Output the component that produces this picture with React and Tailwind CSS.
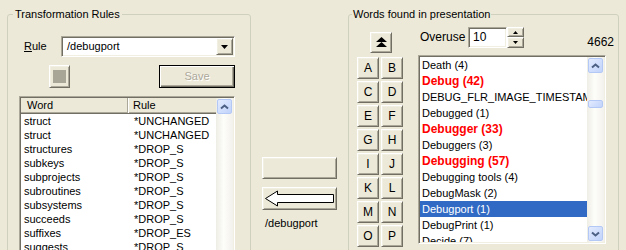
import React from 'react';

const raised = "bg-[#ECE9D8] border border-t-white border-l-white border-r-[#716F64] border-b-[#716F64] shadow-[inset_1px_1px_0_#F1EFE2,inset_-1px_-1px_0_#ACA899]";
const sunken = "border border-t-[#ACA899] border-l-[#ACA899] border-r-white border-b-white shadow-[inset_1px_1px_0_#716F64,inset_-1px_-1px_0_#F1EFE2]";
const xpBtn = "rounded-[2px] border border-[#B4C8F6] bg-[linear-gradient(135deg,#E3EBFE,#C1D3FB)] flex items-center justify-center";

const leftRows = [
    ["struct", "*UNCHANGED"],
    ["struct", "*UNCHANGED"],
    ["structures", "*DROP_S"],
    ["subkeys", "*DROP_S"],
    ["subprojects", "*DROP_S"],
    ["subroutines", "*DROP_S"],
    ["subsystems", "*DROP_S"],
    ["succeeds", "*DROP_S"],
    ["suffixes", "*DROP_ES"],
    ["suggests", "*DROP_S"],
];

const words = [
    { t: "Death (4)" },
    { t: "Debug (42)", hot: true },
    { t: "DEBUG_FLR_IMAGE_TIMESTAMP (1)" },
    { t: "Debugged (1)" },
    { t: "Debugger (33)", hot: true },
    { t: "Debuggers (3)" },
    { t: "Debugging (57)", hot: true },
    { t: "Debugging tools (4)" },
    { t: "DebugMask (2)" },
    { t: "Debugport (1)", sel: true },
    { t: "DebugPrint (1)" },
    { t: "Decide (7)" },
];

const letters = ["A", "B", "C", "D", "E", "F", "G", "H", "I", "J", "K", "L", "M", "N", "O", "P"];

function Chevron({ down }) {
    return (
        <svg width="9" height="6" viewBox="0 0 9 6">
            <path d={down ? "M1 1.5 L4.5 4.5 L8 1.5" : "M1 4.5 L4.5 1.5 L8 4.5"} fill="none" stroke="#4D6185" strokeWidth="2" />
        </svg>
    );
}

function Track({ children, className }) {
    return (
        <div className={`w-[17px] flex flex-col items-center bg-[linear-gradient(to_right,#EEEDE5,#FDFDFA_45%,#F3F1EC)] ${className}`}>
            {children}
        </div>
    );
}

export default function App() {
    return (
        <div className="w-[626px] h-[250px] overflow-hidden bg-[#ECE9D8] flex items-start font-['Liberation_Sans',Arial,sans-serif] text-[11px] text-black leading-[13px]">
            {/* Transformation Rules */}
            <div className="relative ml-[7px] mt-[14px] w-[244px] h-[260px] border border-[#D0D0BF] rounded-[3px]">
                <span className="absolute -top-[7px] left-[5px] px-[2px] bg-[#ECE9D8]">Transformation Rules</span>
                <div className="pt-[21px] pl-[16px] flex items-center">
                    <span className="w-[37px]"><span className="underline">R</span>ule</span>
                    <div className={`w-[174px] h-[21px] bg-white flex items-center ${sunken}`}>
                        <span className="flex-1 pl-[5px]">/debugport</span>
                        <div className={`w-[17px] h-[17px] mr-[1px] flex items-center justify-center ${raised}`}>
                            <svg width="7" height="4" viewBox="0 0 7 4"><path d="M0 0 H7 L3.5 4 Z" fill="#000" /></svg>
                        </div>
                    </div>
                </div>
                <div className="mt-[8px] pl-[41px] flex items-start">
                    <div className={`w-[21px] h-[23px] flex items-center justify-center ${raised}`}>
                        <div className="w-[13px] h-[13px] bg-[#A8A797]" />
                    </div>
                    <button className="ml-[89px] w-[76px] h-[23px] border border-black bg-[#ECE9D8] text-[#ACA899] [text-shadow:1px_1px_0_#fff] shadow-[inset_1px_1px_0_#fff,inset_-1px_-1px_0_#716F64,inset_-2px_-2px_0_#ACA899]">
                        Save
                    </button>
                </div>
                <div className={`mt-[8px] ml-[11px] w-[216px] h-[160px] bg-white flex p-[1px] ${sunken}`}>
                    <div className="flex-1 overflow-hidden">
                        <div className="flex h-[16px] bg-[#ECE9D8] border-b border-[#716F64] shadow-[inset_0_-1px_0_#ACA899]">
                            <div className="w-[107px] pl-[6px] flex items-center border-r border-[#ACA899] shadow-[1px_0_0_#fff]">Word</div>
                            <div className="flex-1 pl-[5px] flex items-center">Rule</div>
                        </div>
                        {leftRows.map((r, i) => (
                            <div key={i} className="flex h-[14px] items-center whitespace-nowrap">
                                <div className="w-[107px] pl-[3px]">{r[0]}</div>
                                <div className="flex-1 pl-[6px]">{r[1]}</div>
                            </div>
                        ))}
                    </div>
                    <Track className="h-full">
                        <div className={`w-[15px] h-[15px] mt-[1px] ${xpBtn}`}><Chevron /></div>
                    </Track>
                </div>
            </div>

            {/* middle */}
            <div className="w-[97px] pl-[11px] pt-[157px] flex flex-col">
                <div className={`w-[75px] h-[22px] ${raised}`} />
                <div className={`mt-[8px] w-[75px] h-[23px] flex items-center justify-center ${raised}`}>
                    <svg width="70" height="17" viewBox="0 0 70 17">
                        <path d="M0.5 8.5 L12.5 1 V4.5 H68.5 V12.5 H12.5 V16 Z" fill="#fff" stroke="#000" strokeWidth="1" />
                    </svg>
                </div>
                <span className="mt-[7px] pl-[3px]">/debugport</span>
            </div>

            {/* Words found in presentation */}
            <div className="relative mt-[14px] w-[271px] h-[260px] border border-[#D0D0BF] rounded-[3px] flex items-start">
                <span className="absolute -top-[7px] left-[3px] px-[1px] bg-[#ECE9D8]">Words found in presentation</span>
                <div className="ml-[8px] w-[46px] pt-[17px] flex flex-col items-center">
                    <div className={`w-[22px] h-[21px] ml-[2px] flex items-center justify-center ${raised}`}>
                        <svg width="11" height="11" viewBox="0 0 11 11">
                            <path d="M5.5 0 L11 5 H0 Z M5.5 5 L11 10 H0 Z" fill="#000" />
                        </svg>
                    </div>
                    <div className="mt-[4px] grid grid-cols-2 gap-x-[2px] gap-y-[2px]">
                        {letters.map(l => (
                            <div key={l} className={`w-[22px] h-[22px] flex items-center justify-center text-[12px] ${raised}`}>{l}</div>
                        ))}
                    </div>
                </div>
                <div className="ml-[15px] w-[196px] pt-[12px] flex flex-col">
                    <div className="flex items-start">
                        <span className="pl-[2px] w-[50px] mt-[4px] text-[12px]">Overuse</span>
                        <div className={`w-[39px] h-[21px] bg-white pl-[4px] pt-[3px] text-[12px] ${sunken}`}>10</div>
                        <div className="w-[17px] h-[21px] flex flex-col">
                            <div className={`h-[10px] flex items-center justify-center ${raised}`}>
                                <svg width="5" height="3" viewBox="0 0 5 3"><path d="M2.5 0 L5 3 H0 Z" fill="#000" /></svg>
                            </div>
                            <div className={`h-[11px] flex items-center justify-center ${raised}`}>
                                <svg width="5" height="3" viewBox="0 0 5 3"><path d="M0 0 H5 L2.5 3 Z" fill="#000" /></svg>
                            </div>
                        </div>
                        <span className="ml-auto mt-[9px] text-[12px]">4662</span>
                    </div>
                    <div className={`mt-[6px] w-[188px] h-[189px] bg-white flex p-[1px] ${sunken}`}>
                        <div className="flex-1 overflow-hidden">
                            {words.map((w, i) => (
                                <div
                                    key={i}
                                    className={`h-[16px] pl-[2px] flex items-center whitespace-nowrap ${w.sel ? 'bg-[#316AC5] text-white' : ''} ${w.hot ? 'text-[#FF0000] font-bold text-[12px]' : 'text-[11px]'}`}
                                >
                                    {w.t}
                                </div>
                            ))}
                        </div>
                        <Track className="h-full justify-between py-[1px]">
                            <div className="flex flex-col items-center">
                                <div className={`w-[15px] h-[15px] ${xpBtn}`}><Chevron /></div>
                                <div className={`w-[15px] h-[8px] mt-[27px] ${xpBtn}`} />
                            </div>
                            <div className={`w-[15px] h-[15px] ${xpBtn}`}><Chevron down /></div>
                        </Track>
                    </div>
                </div>
            </div>
        </div>
    );
}
